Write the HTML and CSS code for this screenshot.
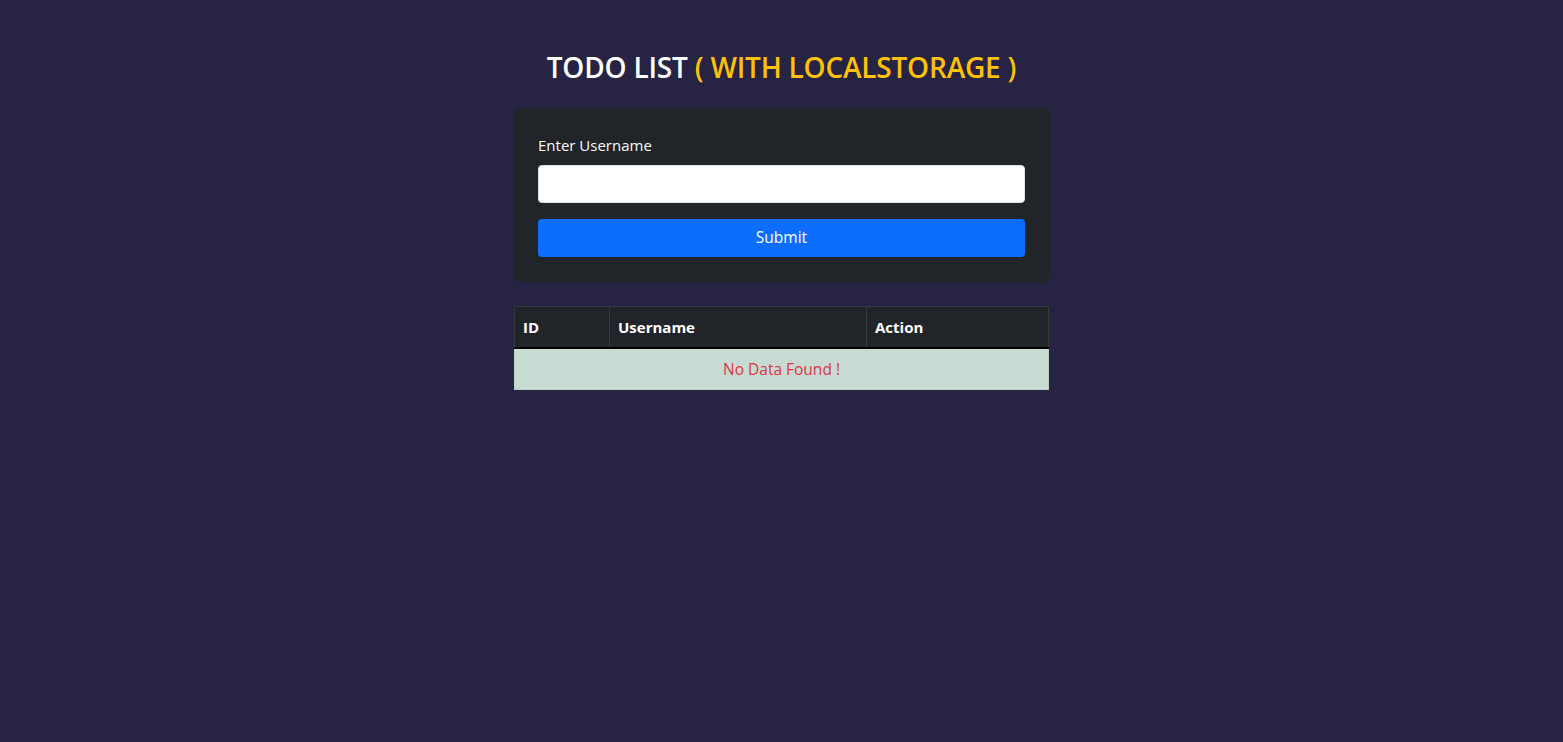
FILE: index.html
```html
<!DOCTYPE html>
<html lang="en">
<head>
<meta charset="utf-8">
<title>Todo List</title>
<link rel="stylesheet" href="styles.css">
</head>
<body>
<main class="wrap">
  <h2 class="title">TODO LIST <span class="accent">( WITH LOCALSTORAGE )</span></h2>
  <form class="card">
    <label class="label" for="username">Enter Username</label>
    <input class="input" id="username" type="text">
    <button class="btn" type="button">Submit</button>
  </form>
  <table class="table">
    <thead>
      <tr>
        <th class="c-id">ID</th>
        <th class="c-user">Username</th>
        <th class="c-action">Action</th>
      </tr>
    </thead>
    <tbody>
      <tr>
        <td class="empty" colspan="3">No Data Found !</td>
      </tr>
    </tbody>
  </table>
</main>
</body>
</html>
```
FILE: styles.css
```css
* { box-sizing: border-box; }
html, body { margin: 0; height: 100%; }
body {
  background: #262343;
  font-family: "Open Sans", "Noto Sans", sans-serif;
  font-size: 15px;
  line-height: 1.5;
  color: #fff;
}
.wrap {
  width: 535px;
  margin: 0 auto;
  padding-top: 48px;
}
.title {
  margin: 0 0 22px;
  text-align: center;
  font-size: 28px;
  font-weight: 600;
  line-height: 38px;
  color: #fff;
  letter-spacing: -0.2px;
}
.accent { color: #ffc107; }
.card {
  display: flex;
  flex-direction: column;
  background: #212529;
  border-radius: 5px;
  padding: 25px 24px 25px;
}
.label {
  font-size: 15px;
  line-height: 24px;
  margin-bottom: 8px;
  color: #f8f9fa;
}
.input {
  height: 38px;
  border: 1px solid #dee2e6;
  border-radius: 4px;
  background: #fff;
  margin-bottom: 16px;
  font: inherit;
  padding: 6px 12px;
}
.btn {
  height: 38px;
  border: 0;
  border-radius: 4px;
  background: #0d6efd;
  color: #fff;
  font: inherit;
  font-size: 15.5px;
}
.table {
  width: 100%;
  margin-top: 24px;
  border-collapse: collapse;
}
.table th {
  background: #212529;
  color: #fff;
  text-align: left;
  font-weight: 700;
  font-size: 15px;
  line-height: 24px;
  padding: 8px 8px 8px;
  border: 1px solid #373b3e;
  border-bottom: 2px solid #000;
}
.c-id { width: 95px; }
.c-user { width: 257px; }
.empty {
  background: #c7dbd2;
  color: #dc3545;
  text-align: center;
  line-height: 24px;
  padding: 8px;
  border: 1px solid #bcd0c7;
  font-size: 15.5px;
}
```
